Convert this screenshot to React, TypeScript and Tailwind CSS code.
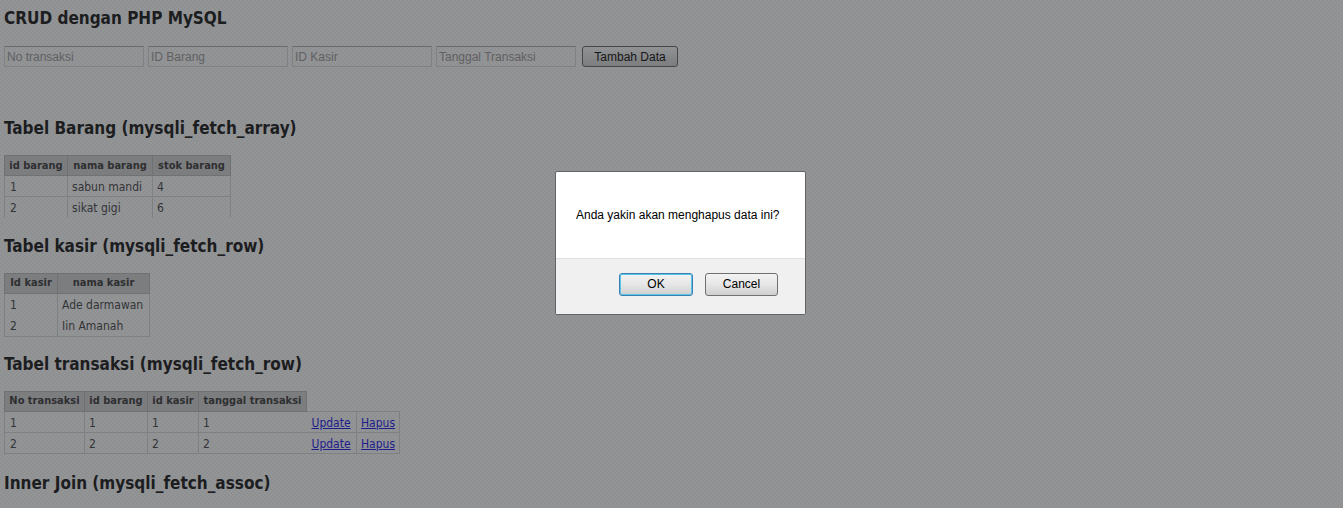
import { useState } from 'react';

const heading = 'text-[17px] leading-5 font-bold text-[#1c1d1f]';
const table = 'table-fixed border-collapse text-xs leading-4 text-[#333436]';
const th =
  'h-5 whitespace-nowrap border border-[#6f7173] bg-[#7c7d7f] p-0 text-center text-[11px] leading-4 font-bold text-[#2e2f31]';
const cell = 'h-[21px] whitespace-nowrap border-[#7e8082] pt-0.5 pr-0 pb-0 pl-1 first:pl-[5px]';
const td = `${cell} border-x`;
const line = 'border-b';
const dialogButton =
  'h-[23px] rounded-[3px] border bg-linear-to-b from-[#f3f3f3] from-0% via-[#e6e6e6] via-50% to-[#cfcfcf] pb-0.5 text-xs text-black';

const fields = [
  { id: 'no', label: 'No transaksi' },
  { id: 'barang', label: 'ID Barang' },
  { id: 'kasir', label: 'ID Kasir' },
  { id: 'tanggal', label: 'Tanggal Transaksi' },
];

function Link({ children, onClick }: { children: string; onClick?: () => void }) {
  return (
    <a href="#" onClick={onClick} className="text-[#1d1d8c] underline">
      {children}
    </a>
  );
}

export default function App() {
  const [open, setOpen] = useState(true);

  return (
    <div className="min-h-screen bg-[#919294] bg-[repeating-conic-gradient(#8f9092_0_25%,#939496_0_50%)] bg-size-[4px_4px] px-1 pt-2 pb-[15px] font-['DejaVu_Sans_Condensed','DejaVu_Sans',sans-serif]">
      <h2 className={heading}>CRUD dengan PHP MySQL</h2>

      <form
        className="mt-[18px] flex flex-wrap gap-1 font-['Liberation_Sans',sans-serif] text-xs"
        onSubmit={(e) => e.preventDefault()}
      >
        {fields.map((f) => (
          <input
            key={f.id}
            aria-label={f.label}
            placeholder={f.label}
            className="h-[21px] w-[140px] border border-[#808183] border-t-[#6a6b6d] bg-transparent px-0.5 text-[#1c1d1f] placeholder:text-[#5f6062]"
          />
        ))}
        <button
          type="submit"
          className="ml-0.5 h-[21px] w-24 rounded-[3px] border border-[#454648] bg-linear-to-b from-[#919294] to-[#7c7d7f] text-[#151617]"
        >
          Tambah Data
        </button>
      </form>

      <section className="mt-[51px]">
        <h2 className={heading}>Tabel Barang (mysqli_fetch_array)</h2>
        <table className={`${table} mt-[17px] w-[227px]`}>
          <colgroup>
            <col className="w-[63px]" />
            <col className="w-[85px]" />
            <col className="w-[78px]" />
          </colgroup>
          <thead>
            <tr>
              <th className={th}>id barang</th>
              <th className={th}>nama barang</th>
              <th className={th}>stok barang</th>
            </tr>
          </thead>
          <tbody>
            <tr>
              <td className={`${td} ${line}`}>1</td>
              <td className={`${td} ${line}`}>sabun mandi</td>
              <td className={`${td} ${line}`}>4</td>
            </tr>
            <tr>
              <td className={td}>2</td>
              <td className={td}>sikat gigi</td>
              <td className={td}>6</td>
            </tr>
          </tbody>
        </table>
      </section>

      <section className="mt-[18px]">
        <h2 className={heading}>Tabel kasir (mysqli_fetch_row)</h2>
        <table className={`${table} mt-[17px] w-[146px]`}>
          <colgroup>
            <col className="w-[53px]" />
            <col className="w-[92px]" />
          </colgroup>
          <thead>
            <tr>
              <th className={th}>Id kasir</th>
              <th className={th}>nama kasir</th>
            </tr>
          </thead>
          <tbody>
            <tr className="h-[22px]">
              <td className={td}>1</td>
              <td className={td}>Ade darmawan</td>
            </tr>
            <tr>
              <td className={`${td} ${line}`}>2</td>
              <td className={`${td} ${line}`}>Iin Amanah</td>
            </tr>
          </tbody>
        </table>
      </section>

      <section className="mt-[17px]">
        <h2 className={heading}>Tabel transaksi (mysqli_fetch_row)</h2>
        <table className={`${table} mt-[17px] w-[396px]`}>
          <colgroup>
            <col className="w-20" />
            <col className="w-[63px]" />
            <col className="w-[51px]" />
            <col className="w-[108px]" />
            <col className="w-[50px]" />
            <col className="w-[43px]" />
          </colgroup>
          <thead>
            <tr>
              <th className={th}>No transaksi</th>
              <th className={th}>id barang</th>
              <th className={th}>id kasir</th>
              <th className={th}>tanggal transaksi</th>
            </tr>
          </thead>
          <tbody>
            {['1', '2'].map((n) => (
              <tr key={n}>
                <td className={`${td} border-y`}>{n}</td>
                <td className={`${td} border-y`}>{n}</td>
                <td className={`${td} border-y`}>{n}</td>
                <td className={`${cell} border-y border-l`}>{n}</td>
                <td className={`${cell} border-y border-r`}>
                  <span className="pl-px">
                    <Link>Update</Link>
                  </span>
                </td>
                <td className={`${td} border-y`}>
                  <Link onClick={() => setOpen(true)}>Hapus</Link>
                </td>
              </tr>
            ))}
          </tbody>
        </table>
      </section>

      <h2 className={`${heading} mt-[19px]`}>Inner Join (mysqli_fetch_assoc)</h2>

      {open && (
        <div className="fixed inset-0 flex items-start justify-center pt-[171px] pl-[18px]">
          <div
            role="dialog"
            aria-modal="true"
            aria-labelledby="confirm-text"
            className="w-[251px] overflow-hidden rounded-xs border border-[#626365] bg-white font-['Liberation_Sans',sans-serif] text-xs text-black"
          >
            <p id="confirm-text" className="px-5 py-[35px] leading-4 whitespace-nowrap">
              Anda yakin akan menghapus data ini?
            </p>
            <div className="flex justify-end gap-3 border-t border-[#dfdfdf] bg-[#f0f0f0] pt-3.5 pr-[27px] pb-[18px]">
              <button
                onClick={() => setOpen(false)}
                className={`${dialogButton} w-[74px] border-[#3c7fb1] inset-ring inset-ring-[#57c6e6]`}
              >
                OK
              </button>
              <button onClick={() => setOpen(false)} className={`${dialogButton} w-[73px] border-[#707070]`}>
                Cancel
              </button>
            </div>
          </div>
        </div>
      )}
    </div>
  );
}
